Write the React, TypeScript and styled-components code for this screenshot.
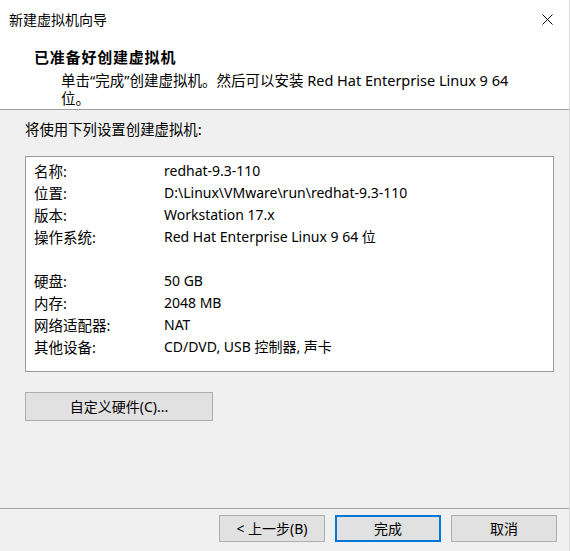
import React from "react";
import styled, { createGlobalStyle } from "styled-components";

const GlobalStyle = createGlobalStyle`
  html, body {
    margin: 0;
    padding: 0;
    background: #f0f0f0;
  }
  body {
    font-family: "Noto Sans", "Noto Sans CJK SC", sans-serif;
    font-size: 14px;
    color: #000;
  }
  * { box-sizing: border-box; }
`;

const Window = styled.div`
  width: 570px;
  height: 551px;
  display: flex;
  flex-direction: column;
  background: #f0f0f0;
  border-right: 1px solid #dadada;
  overflow: hidden;
`;

const TitleBar = styled.div`
  height: 38px;
  flex: none;
  display: flex;
  align-items: center;
  justify-content: space-between;
  padding: 0 16px 0 9px;
  background: #fff;
  font-family: "Noto Sans CJK SC", sans-serif;
  font-size: 14px;
`;

const CloseIcon = styled.svg`
  width: 11px;
  height: 11px;
  display: block;
`;

const Header = styled.div`
  flex: none;
  background: #fff;
  padding: 10px 0 2px 0;
  border-bottom: 1px solid #a0a0a0;
  display: flex;
  flex-direction: column;
  gap: 5px;
`;

const HeaderTitle = styled.div`
  padding-left: 34px;
  font-family: "Noto Sans CJK SC", sans-serif;
  font-weight: 700;
  font-size: 15px;
  letter-spacing: 0.8px;
  line-height: 18px;
`;

const HeaderText = styled.div`
  margin-left: 61px;
  width: 462px;
  font-family: "Noto Sans", "Noto Sans CJK SC", sans-serif;
  font-size: 14.5px;
  line-height: 18px;
`;

const Body = styled.div`
  flex: 1;
  padding: 10px 16px 0 25px;
  display: flex;
  flex-direction: column;
  align-items: flex-start;
`;

const Intro = styled.div`
  font-family: "Noto Sans CJK SC", sans-serif;
  font-size: 14.4px;
  line-height: 18px;
`;

const SummaryBox = styled.div`
  margin-top: 18px;
  width: 529px;
  height: 216px;
  background: #fff;
  border: 1px solid #9a9a9a;
  padding: 3px 8px;
  display: grid;
  grid-template-columns: 130px 1fr;
  grid-auto-rows: 22px;
  align-content: start;
`;

const Cell = styled.div<{ $label?: boolean }>`
  display: flex;
  align-items: center;
  white-space: nowrap;
  font-family: "Noto Sans", "Noto Sans CJK SC", sans-serif;
  font-size: ${(p) => (p.$label ? "14.5px" : "14px")};
  line-height: 18px;
`;

const Button = styled.button<{ $primary?: boolean }>`
  font-family: "Noto Sans", "Noto Sans CJK SC", sans-serif;
  font-size: 14px;
  color: #000;
  background: #e1e1e1;
  border: ${(p) => (p.$primary ? "2px solid #0078d7" : "1px solid #adadad")};
  padding: 0;
  margin: 0;
  display: flex;
  align-items: center;
  justify-content: center;
  line-height: 18px;
`;

const WideButton = styled(Button)`
  margin-top: 20px;
  width: 188px;
  height: 29px;
`;

const Footer = styled.div`
  flex: none;
  height: 43px;
  border-top: 1px solid #a0a0a0;
  display: flex;
  justify-content: flex-end;
  align-items: flex-start;
  gap: 10px;
  padding: 6px 12px 0 0;
`;

const FooterButton = styled(Button)`
  width: 106px;
  height: 27px;
`;

const rows: [string, string][] = [
  ["名称:", "redhat-9.3-110"],
  ["位置:", "D:\\Linux\\VMware\\run\\redhat-9.3-110"],
  ["版本:", "Workstation 17.x"],
  ["操作系统:", "Red Hat Enterprise Linux 9 64 位"],
  ["", ""],
  ["硬盘:", "50 GB"],
  ["内存:", "2048 MB"],
  ["网络适配器:", "NAT"],
  ["其他设备:", "CD/DVD, USB 控制器, 声卡"],
];

export default function App() {
  return (
    <>
      <GlobalStyle />
      <Window>
        <TitleBar>
          <span>新建虚拟机向导</span>
          <CloseIcon viewBox="0 0 11 11">
            <path d="M0.5 0.5 L10.5 10.5 M10.5 0.5 L0.5 10.5" stroke="#000" strokeWidth="1" fill="none" />
          </CloseIcon>
        </TitleBar>
        <Header>
          <HeaderTitle>已准备好创建虚拟机</HeaderTitle>
          <HeaderText>单击“完成”创建虚拟机。然后可以安装 Red Hat Enterprise Linux 9 64 位。</HeaderText>
        </Header>
        <Body>
          <Intro>将使用下列设置创建虚拟机:</Intro>
          <SummaryBox>
            {rows.map(([k, v], i) => (
              <React.Fragment key={i}>
                <Cell $label>{k}</Cell>
                <Cell>{v}</Cell>
              </React.Fragment>
            ))}
          </SummaryBox>
          <WideButton>自定义硬件(C)...</WideButton>
        </Body>
        <Footer>
          <FooterButton>&lt; 上一步(B)</FooterButton>
          <FooterButton $primary>完成</FooterButton>
          <FooterButton>取消</FooterButton>
        </Footer>
      </Window>
    </>
  );
}
